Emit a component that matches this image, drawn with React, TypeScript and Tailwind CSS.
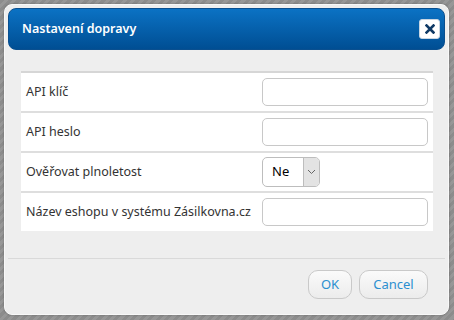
import React from "react";

function Row({ label, children, first }: { label: string; children: React.ReactNode; first?: boolean }) {
  return (
    <div className={`flex h-[40px] items-center border-t-[2px] ${first ? "border-[#d6d6d6]" : "border-[#dedede]"}`}>
      <div className="w-[241px] pl-[5px] text-[12.5px] text-[#333]">{label}</div>
      <div className="flex-1">{children}</div>
    </div>
  );
}

function Input() {
  return <div className="h-[28px] w-[166px] rounded-[5px] border border-[#c8c8c8] bg-white" />;
}

export default function App() {
  return (
    <div
      className="relative h-[320px] w-[454px] overflow-hidden bg-[repeating-linear-gradient(135deg,#8c8c8c_0px,#8c8c8c_3px,#979797_3px,#979797_6px)] pl-[4px] pt-[4px]"
      style={{ fontFamily: '"Noto Sans", "Open Sans", sans-serif' }}
    >
      <div className="flex h-[311px] w-[445px] flex-col rounded-[8px] border border-[#f8f8f8] bg-[#eeeeee] px-[3px] pt-[3px] shadow-[0_0_2px_rgba(0,0,0,0.3)]">
        <div className="flex h-[42px] items-center justify-between rounded-[8px] border border-[#0a4f8f] bg-[linear-gradient(#0b72c4,#004e93)] pl-[13px] pr-[4px]">
          <span className="text-[12.5px] font-semibold text-white">Nastavení dopravy</span>
          <div className="flex h-[20px] w-[21px] items-center justify-center rounded-[3px] border border-[#c9d6e3] bg-white">
            <svg width="10" height="10" viewBox="0 0 10 10">
              <path d="M1.5 1.5 L8.5 8.5 M8.5 1.5 L1.5 8.5" stroke="#0f3a66" strokeWidth="2.6" strokeLinecap="square" />
            </svg>
          </div>
        </div>
        <div className="ml-[13px] mr-[12px] mt-[21px] bg-white">
          <Row label="API klíč" first>
            <Input />
          </Row>
          <Row label="API heslo">
            <Input />
          </Row>
          <Row label="Ověřovat plnoletost">
            <div className="flex h-[30px] w-[58px] items-stretch overflow-hidden rounded-[5px] border border-[#bdbdbd] bg-white">
              <div className="flex flex-1 items-center pl-[9px] text-[13px] text-black">Ne</div>
              <div className="flex w-[16px] items-center justify-center border-l border-[#bdbdbd] bg-[#e3e3e3]">
                <svg width="9" height="6" viewBox="0 0 9 6">
                  <path d="M1 1 L4.5 4.5 L8 1" fill="none" stroke="#666" strokeWidth="1" />
                </svg>
              </div>
            </div>
          </Row>
          <Row label="Název eshopu v systému Zásilkovna.cz">
            <Input />
          </Row>
        </div>
        <div className="mt-[27px] border-t border-[#d9d9d9]" />
        <div className="mr-[17px] mt-[11px] flex justify-end gap-[7px]">
          <button className="h-[29px] w-[44px] rounded-[10px] border border-[#c9c9c9] bg-[linear-gradient(#fafafa,#ececec)] text-[13px] text-[#2b8fd0]">
            OK
          </button>
          <button className="h-[29px] w-[69px] rounded-[10px] border border-[#c9c9c9] bg-[linear-gradient(#fafafa,#ececec)] text-[13px] text-[#2b8fd0]">
            Cancel
          </button>
        </div>
      </div>
    </div>
  );
}
